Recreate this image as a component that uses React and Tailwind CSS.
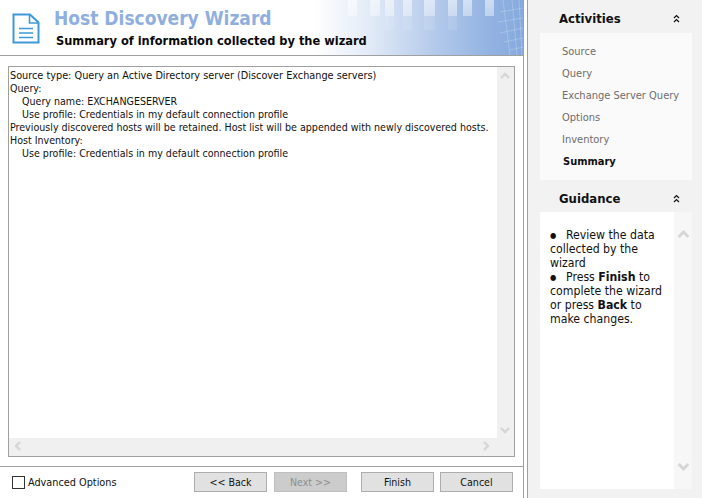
import React from "react";

const font = { fontFamily: '"DejaVu Sans", Tahoma, sans-serif' };

function DocIcon() {
  return (
    <svg width="28" height="31" viewBox="0 0 28 31" fill="none" stroke="#3d9ad9" strokeWidth="2">
      <path d="M1.5 1.5 H18 L26.5 9.5 V29.5 H1.5 Z" />
      <path d="M17.5 1.5 V10 H26.5" strokeWidth="1.6" />
      <path d="M7 15.5 H21 M7 20 H21 M7 24.5 H21" strokeWidth="1.6" />
    </svg>
  );
}

function Chev({ dir, cls, size = 14 }) {
  const d = { up: "M3 9 L7 5 L11 9", down: "M3 5 L7 9 L11 5", left: "M9 3 L5 7 L9 11", right: "M5 3 L9 7 L5 11" }[dir];
  return (
    <svg width={size} height={size} viewBox="0 0 14 14" fill="none" stroke="#d6d6d6" strokeWidth="2.4" className={cls}>
      <path d={d} />
    </svg>
  );
}

function DoubleUp() {
  return (
    <svg width="7" height="9" viewBox="0 0 7 9" fill="none" stroke="#111" strokeWidth="1.2">
      <path d="M1 4 L3.5 1.5 L6 4 M1 8 L3.5 5.5 L6 8" />
    </svg>
  );
}

function Btn({ children, disabled }) {
  return (
    <button className={"w-[73px] h-[20px] border text-[10.6px] leading-[17px] font-stretch-condensed " + (disabled ? "bg-[#cccccc] border-[#bfbfbf] text-[#8c8c8c]" : "bg-[#e1e1e1] border-[#adadad] text-[#111]")}>
      {children}
    </button>
  );
}

function BannerArt() {
  const bars = [[348, 9], [370, 10], [385, 9], [403, 9], [424, 11], [448, 9], [463, 9], [485, 9]];
  return (
    <svg width="523" height="55" viewBox="0 0 523 55" className="absolute left-0 top-0" fill="none">
      <defs>
        <linearGradient id="fade" x1="0" y1="0" x2="0" y2="1">
          <stop offset="0" stopColor="#fff" stopOpacity="0.55" />
          <stop offset="1" stopColor="#fff" stopOpacity="0.4" />
        </linearGradient>
      </defs>
      {bars.map(([x, w]) => (
        <rect key={x} x={x} y="0" width={w} height="16" fill="url(#fade)" />
      ))}
      {bars.slice(2, 6).map(([x, w]) => (
        <rect key={x} x={x} y="16" width={w} height="14" fill="#fff" opacity="0.1" />
      ))}
      <g stroke="#fff" strokeOpacity="0.22" strokeWidth="1">
        <path d="M523 8 L500 12 M523 18 L498 22 M523 28 L500 33 M523 38 L504 42 M523 47 L510 50" />
        <path d="M503 0 L510 55 M512 0 L517 55 M519 0 L522 55" />
      </g>
    </svg>
  );
}

function Banner() {
  return (
    <div className="relative h-[56px] border-b border-[#a0a0a0] flex bg-[linear-gradient(90deg,#ffffff_0%,#ffffff_60%,#e4ecf8_70%,#b4caeb_83%,#94b4e2_93%,#86aade_100%)] overflow-hidden">
      <BannerArt />
      <div className="relative w-[54px] flex items-start pt-[13px] pl-[12px] shrink-0"><DocIcon /></div>
      <div className="relative flex flex-col">
        <div className="text-[19px] leading-[24px] mt-[6px] font-bold text-[#8fafdf] font-stretch-condensed">Host Discovery Wizard</div>
        <div className="text-[12.7px] leading-[18px] mt-[2px] ml-[2px] font-bold text-[#0a0a0a] font-stretch-condensed">Summary of information collected by the wizard</div>
      </div>
    </div>
  );
}

function Summary() {
  return (
    <div className="flex-1 mx-[8px] mt-[10px] mb-[9px] border border-[#a0a0a0] bg-[#f0f0f0] flex flex-col min-h-0">
      <div className="flex flex-1 min-h-0">
        <div className="flex-1 min-w-0 bg-white pl-[1px] pt-[2px] text-[10.6px] leading-[13px] text-[#111] whitespace-nowrap font-stretch-condensed">
          <div className="text-[10.8px]">Source type: Query an Active Directory server (Discover Exchange servers)</div>
          <div>Query:</div>
          <div className="pl-[12px]">Query name: EXCHANGESERVER</div>
          <div className="pl-[12px]">Use profile: Credentials in my default connection profile</div>
          <div>Previously discovered hosts will be retained. Host list will be appended with newly discovered hosts.</div>
          <div>Host Inventory:</div>
          <div className="pl-[12px]">Use profile: Credentials in my default connection profile</div>
        </div>
        <div className="w-[17px] shrink-0 flex flex-col justify-between items-center pt-[2px] pb-[1px] pr-[2px]">
          <Chev dir="up" />
          <Chev dir="down" />
        </div>
      </div>
      <div className="h-[18px] flex justify-between items-center pb-[2px] pl-[2px] pr-[21px]">
        <Chev dir="left" />
        <Chev dir="right" />
      </div>
    </div>
  );
}

function Footer() {
  return (
    <div className="h-[32px] border-t border-[#a0a0a0] flex items-start pt-[5px] pl-[12px] text-[10.8px] text-[#111] font-stretch-condensed">
      <div className="w-[13px] h-[13px] border border-[#333] bg-white mt-[4px] shrink-0" />
      <span className="ml-[3px] w-[166px] leading-[21px]">Advanced Options</span>
      <div className="flex"><Btn>{"<< Back"}</Btn><div className="w-[7px]" /><Btn disabled>{"Next >>"}</Btn><div className="w-[14px]" /><Btn>Finish</Btn><div className="w-[6px]" /><Btn>Cancel</Btn></div>
    </div>
  );
}

function Bullet() {
  return <span className="inline-block w-[16px] text-[8px] leading-[8px] align-[1px]">●</span>;
}

function Sidebar() {
  return (
    <div className="flex-1 bg-[#f2f2f2] flex flex-col pl-[12px] font-stretch-condensed">
      <div className="h-[33px] pt-[4px] flex items-center justify-between pl-[19px] pr-[22px] text-[13px] font-bold text-[#111]"><span>Activities</span><DoubleUp /></div>
      <div className="h-[147px] w-[152px] bg-[#fafafa] pt-[8px] pl-[22px] text-[11px] leading-[22px] text-[#6d6d6d]">
        <div>Source</div><div>Query</div><div>Exchange Server Query</div><div>Options</div><div>Inventory</div><div className="font-bold text-[#111] pl-[1px]">Summary</div>
      </div>
      <div className="h-[32px] pt-[5px] flex items-center justify-between pl-[19px] pr-[22px] text-[13px] font-bold text-[#111]"><span>Guidance</span><DoubleUp /></div>
      <div className="flex flex-1 mb-[9px] mr-[10px]">
        <div className="w-[134px] bg-white pt-[16px] pl-[10px] pr-[4px] text-[12.2px] leading-[14px] text-[#111]">
          <div><Bullet />Review the data collected by the wizard</div>
          <div><Bullet />Press <b>Finish</b> to complete the wizard or press <b>Back</b> to make changes.</div>
        </div>
        <div className="flex-1 bg-[#f7f7f7] flex flex-col justify-between items-center pt-[14px] pb-[14px]">
          <Chev dir="up" size={17} />
          <Chev dir="down" size={17} />
        </div>
      </div>
    </div>
  );
}

export default function App() {
  return (
    <div className="w-[702px] h-[498px] flex bg-white overflow-hidden" style={font}>
      <div className="w-[524px] flex flex-col border-r border-[#a0a0a0] shrink-0">
        <Banner />
        <Summary />
        <Footer />
      </div>
      <div className="w-[4px] bg-white border-r border-[#a0a0a0] shrink-0" />
      <Sidebar />
    </div>
  );
}
